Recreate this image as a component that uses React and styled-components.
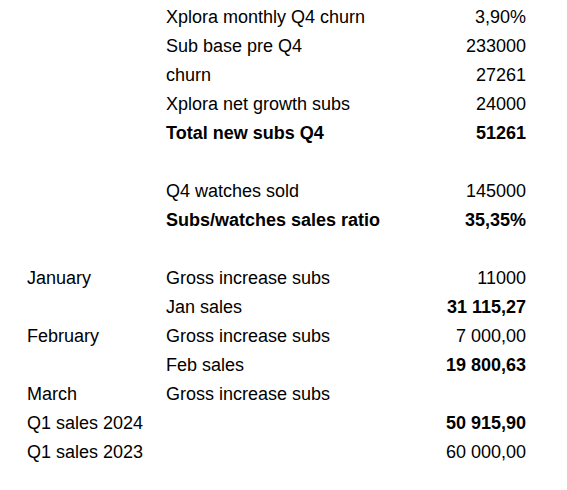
import React from "react";
import styled, { createGlobalStyle } from "styled-components";

const Global = createGlobalStyle`
  html, body { margin: 0; padding: 0; background: #ffffff; }
  body { font-family: "Liberation Sans", Arial, sans-serif; color: #000; }
`;

const Sheet = styled.div`
  display: grid;
  grid-template-columns: 139px 200px 160px;
  grid-auto-rows: 29px;
  padding: 3px 0 0 27px;
  font-size: 18px;
`;

const Cell = styled.div`
  display: flex;
  align-items: center;
  justify-content: ${(p) => (p.$num ? "flex-end" : "flex-start")};
  font-weight: ${(p) => (p.$bold ? 700 : 400)};
  white-space: nowrap;
`;

const rows = [
  ["", "Xplora monthly Q4 churn", "3,90%"],
  ["", "Sub base pre Q4", "233000"],
  ["", "churn", "27261"],
  ["", "Xplora net growth subs", "24000"],
  ["", "Total new subs Q4", "51261", "all"],
  null,
  ["", "Q4 watches sold", "145000"],
  ["", "Subs/watches sales ratio", "35,35%", "all"],
  null,
  ["January", "Gross increase subs", "11000"],
  ["", "Jan sales", "31 115,27", "num"],
  ["February", "Gross increase subs", "7 000,00"],
  ["", "Feb sales", "19 800,63", "num"],
  ["March", "Gross increase subs", ""],
  ["Q1 sales 2024", "", "50 915,90", "num"],
  ["Q1 sales 2023", "", "60 000,00"],
];

export default function App() {
  return (
    <>
      <Global />
      <Sheet>
        {rows.map((r, i) =>
          r === null ? (
            <React.Fragment key={i}>
              <Cell />
              <Cell />
              <Cell />
            </React.Fragment>
          ) : (
            <React.Fragment key={i}>
              <Cell>{r[0]}</Cell>
              <Cell $bold={r[3] === "all"}>{r[1]}</Cell>
              <Cell $num $bold={r[3] === "all" || r[3] === "num"}>
                {r[2]}
              </Cell>
            </React.Fragment>
          )
        )}
      </Sheet>
    </>
  );
}
